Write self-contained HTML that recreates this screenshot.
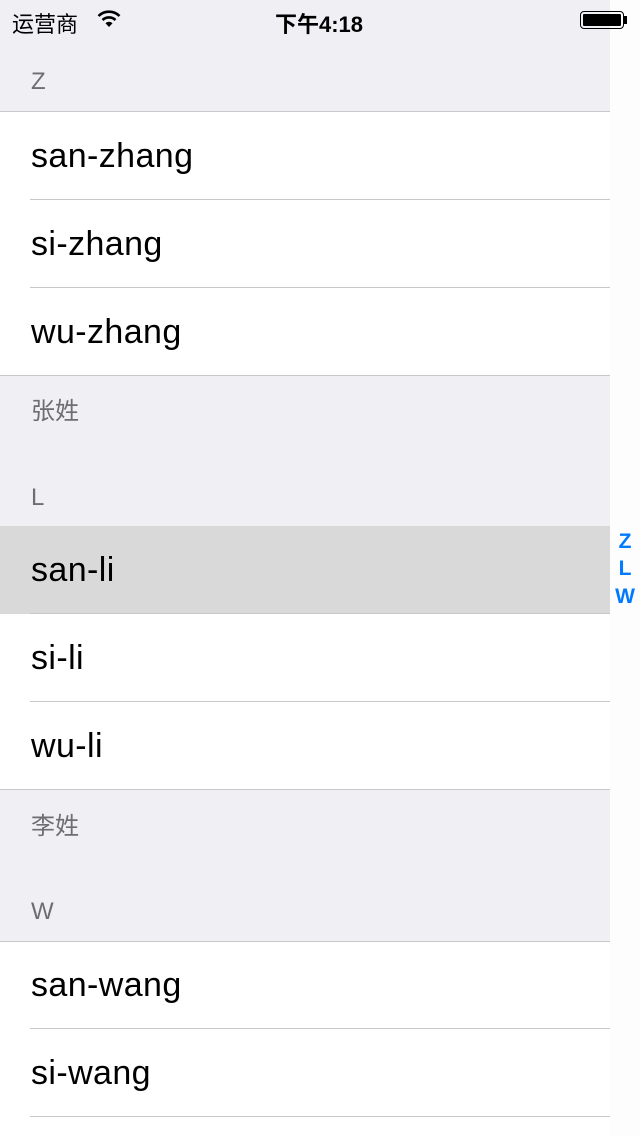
<!DOCTYPE html><html><head><meta charset="utf-8"><style>
html,body{margin:0;width:640px;height:1136px;overflow:hidden}
body{background:#efeff4;font-family:"Liberation Sans","Noto Sans CJK SC",sans-serif;position:relative}
.strip{position:absolute;left:610px;top:0;width:30px;height:1136px;background:#fdfdfd}
.a{position:absolute;left:0;width:610px}
.row{background:#fff;height:88px;font-size:34px;letter-spacing:0.4px;color:#000;line-height:88px;padding-left:31px;box-sizing:border-box;position:relative}
.row:after{content:"";position:absolute;left:30px;right:0;bottom:0;height:1px;background:#c8c7cc}
.row.last:after{left:0}
.h{position:absolute;left:31px;font-size:24px;color:#6d6d72}
.line{position:absolute;left:0;width:610px;height:1px;background:#c8c7cc}
.idx{position:absolute;left:610px;width:30px;text-align:center;color:#007aff;font-weight:bold;font-size:21px}
</style></head><body>
<div class="strip"></div>
<div style="position:absolute;left:12px;top:7px;font-size:22px">运营商</div>
<svg style="position:absolute;left:97px;top:10px" width="24" height="18" viewBox="0 0 24 18"><path d="M1.5 6A15 15 0 0 1 22.5 6" stroke="#000" stroke-width="2.6" fill="none"/><path d="M5.5 10A9.5 9.5 0 0 1 18.5 10" stroke="#000" stroke-width="2.6" fill="none"/><path d="M12 17L8.5 13.2A5 5 0 0 1 15.5 13.2Z" fill="#000"/></svg>
<div style="position:absolute;left:275px;top:7px;font-size:22px;font-weight:bold">下午4:18</div>
<div style="position:absolute;left:580px;top:11px;width:44px;height:18px;border:1.5px solid #000;border-radius:4px;box-sizing:border-box;padding:2px"><div style="background:#000;width:100%;height:100%;border-radius:1px"></div></div>
<div style="position:absolute;left:624px;top:16px;width:3px;height:8px;background:#000"></div>
<div class="h" style="top:68px">Z</div>
<div class="line" style="top:111px"></div>
<div class="a" style="top:112px">
<div class="row">san-zhang</div><div class="row">si-zhang</div><div class="row last">wu-zhang</div></div>
<div class="h" style="top:391px">张姓</div>
<div class="h" style="top:484px">L</div>
<div class="a" style="top:526px">
<div class="row" style="background:#d9d9d9">san-li</div><div class="row">si-li</div><div class="row last">wu-li</div></div>
<div class="h" style="top:806px">李姓</div>
<div class="h" style="top:898px">W</div>
<div class="line" style="top:941px"></div>
<div class="a" style="top:942px">
<div class="row" style="height:87px;line-height:87px">san-wang</div><div class="row">si-wang</div><div style="background:#fff;height:30px"></div></div>
<div class="idx" style="top:530px">Z</div>
<div class="idx" style="top:557px">L</div>
<div class="idx" style="top:585px">W</div>
</body></html>
